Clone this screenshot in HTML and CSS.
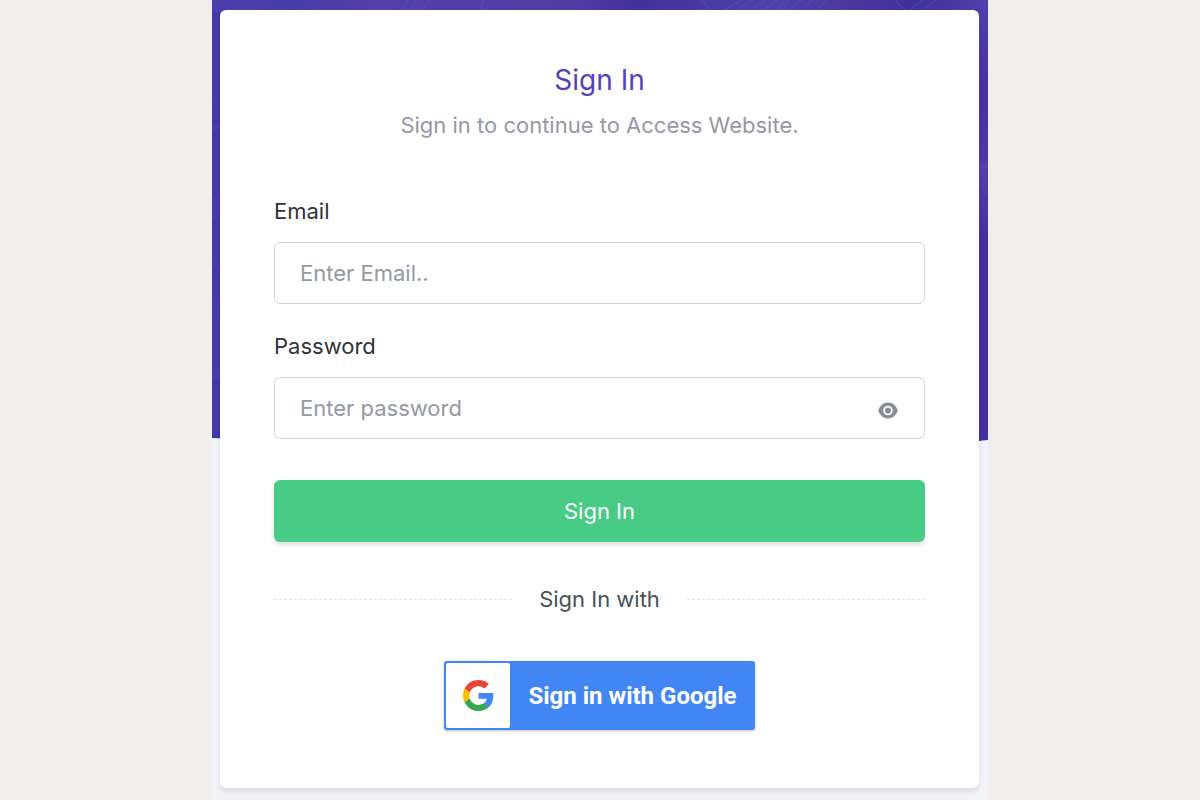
FILE: index.html
```html
<!DOCTYPE html>
<html lang="en">
<head>
<meta charset="utf-8">
<meta name="viewport" content="width=device-width, initial-scale=1">
<title>Sign In</title>
<link rel="stylesheet" href="styles.css">
</head>
<body>
<div class="page">
  <svg class="backdrop" viewBox="0 0 776 442" preserveAspectRatio="none" aria-hidden="true">
    <defs>
      <linearGradient id="top" x1="0" x2="1" y1="0" y2="0">
        <stop offset="0" stop-color="#4c40ae"/>
        <stop offset=".1" stop-color="#453dab"/>
        <stop offset=".2" stop-color="#553fa9"/>
        <stop offset=".45" stop-color="#553da6"/>
        <stop offset=".55" stop-color="#44309c"/>
        <stop offset=".72" stop-color="#4d43ad"/>
        <stop offset=".82" stop-color="#50379f"/>
        <stop offset=".9" stop-color="#40309c"/>
        <stop offset="1" stop-color="#5040ab"/>
      </linearGradient>
      <linearGradient id="right" x1="0" x2="0" y1="0" y2="1">
        <stop offset="0" stop-color="#5140ab"/>
        <stop offset=".22" stop-color="#44309e"/>
        <stop offset=".36" stop-color="#4b38a5"/>
        <stop offset=".37" stop-color="#5540aa"/>
        <stop offset=".52" stop-color="#44309f"/>
        <stop offset="1" stop-color="#44309f"/>
      </linearGradient>
    </defs>
    <path d="M0 0H776V439L766 441Q380 450 0 438Z" fill="#403aa9"/>
    <path d="M0 0H776V12H0Z" fill="url(#top)"/>
    <path d="M764 0H776V440L764 441Z" fill="url(#right)"/>
    <path d="M190 10Q194 4 196 0M198 10Q203 4 204 0M208 10Q215 5 218 0M268 10l4-10M490 0l8 10M512 10l18-10M525 10l16-10M538 10l15-10M551 10l14-10M564 10l13-10M577 10l12-10M590 10l10-10M606 10l8-10M683 0l10 10M697 10l14-10M712 10l12-10" fill="none" stroke="#5360bd" opacity=".55"/>
    <path d="M0 95q5 2 4 8l-4 2zM0 125l8-2v5l-8 5zM0 200l7-8v25l-7 4zM0 250l8 18v4l-8-8zM0 296l6 3v22l-6-3zM0 370l8-6v14l-8 2z" fill="#573eaa" opacity=".4"/>
    <path d="M769 168h1m3 0h1m-4 6h1m2 6h1m-5 4h1m3 9h1" stroke="#826bc0" fill="none" opacity=".6"/>
  </svg>
  <main class="card">
    <h1 class="title">Sign In</h1>
    <p class="subtitle">Sign in to continue to Access Website.</p>
    <form class="form">
      <div class="field">
        <label class="label" for="email">Email</label>
        <input class="input" id="email" type="email" placeholder="Enter Email..">
      </div>
      <div class="field">
        <label class="label" for="password">Password</label>
        <div class="password">
          <input class="input" id="password" type="password" placeholder="Enter password">
          <button class="reveal" type="button" aria-label="Show password">
            <svg width="20" height="17" viewBox="0 0 20 17" aria-hidden="true">
              <path d="M10 .5C5.300 .5 1.700 3.800 .3 8.500 1.700 13.200 5.300 16.500 10 16.500s8.300-3.300 9.700-8C18.300 3.800 14.700 .5 10 .5Z" fill="#898c98"/>
              <circle cx="10" cy="8.500" r="3.900" fill="#898c98" stroke="#fff" stroke-width="1.800"/>
            </svg>
          </button>
        </div>
      </div>
      <button class="submit" type="submit">Sign In</button>
    </form>
    <div class="divider"><span>Sign In with</span></div>
    <button class="google" type="button">
      <span class="google-logo">
        <svg width="31" height="31" viewBox="0 0 48 48" aria-hidden="true">
          <path fill="#ea4335" d="M24 9.500c3.540 0 6.710 1.220 9.210 3.600l6.850-6.850C35.900 2.380 30.470 0 24 0 14.620 0 6.510 5.380 2.560 13.220l7.980 6.190C12.430 13.720 17.740 9.500 24 9.500z"/>
          <path fill="#4285f4" d="M46.980 24.550c0-1.570-.15-3.090-.38-4.550H24v9.020h12.940c-.58 2.960-2.260 5.480-4.780 7.180l7.730 6c4.510-4.180 7.090-10.360 7.090-17.650z"/>
          <path fill="#fbbc05" d="M10.530 28.590c-.48-1.450-.76-2.990-.76-4.590s.27-3.140.76-4.590l-7.980-6.190C.92 16.460 0 20.120 0 24c0 3.880.92 7.540 2.560 10.780l7.970-6.190z"/>
          <path fill="#34a853" d="M24 48c6.480 0 11.930-2.130 15.890-5.810l-7.730-6c-2.150 1.450-4.920 2.300-8.160 2.300-6.260 0-11.570-4.220-13.470-9.910l-7.980 6.190C6.510 42.620 14.620 48 24 48z"/>
        </svg>
      </span>
      <span class="google-text">Sign in with Google</span>
    </button>
  </main>
</div>
</body>
</html>
```
FILE: styles.css
```css
* {
  box-sizing: border-box;
}

body {
  margin: 0;
  background: #f1eeed;
  color: #495057;
  font-family: Inter, "Liberation Sans", sans-serif;
  font-size: 22px;
  line-height: 28px;
}

.page {
  position: relative;
  max-width: 776px;
  min-height: 100vh;
  margin: 0 auto;
  padding: 10px 9px 12px 8px;
  background: #f2f2f9;
}

.backdrop {
  position: absolute;
  top: 0;
  left: 0;
  width: 100%;
  height: 442px;
}

.card {
  position: relative;
  display: flex;
  flex-direction: column;
  padding: 52px 54px 58px;
  border-radius: 6px;
  background: #fff;
  box-shadow: 0 4px 4px rgba(40, 50, 60, 0.1);
}

.title {
  margin: 0;
  color: #5543b5;
  font-size: 28px;
  font-weight: 400;
  line-height: 36px;
  text-align: center;
}

.subtitle {
  margin: 13px 0 0;
  color: #9598a5;
  text-align: center;
}

.form {
  display: flex;
  flex-direction: column;
  margin-top: 58px;
}

.field {
  display: flex;
  flex-direction: column;
  gap: 17px;
  margin-bottom: 28px;
}

.label {
  color: #30333b;
}

.input {
  width: 100%;
  height: 62px;
  padding: 0 25px;
  border: 1px solid #d0d4dc;
  border-radius: 6px;
  background: #fff;
  color: #495057;
  font: inherit;
}

.input::placeholder {
  color: #9598a5;
  opacity: 1;
}

.password {
  position: relative;
}

.password .input {
  padding-right: 64px;
}

.reveal {
  position: absolute;
  top: 0;
  right: 17px;
  bottom: 0;
  display: flex;
  align-items: center;
  justify-content: center;
  width: 40px;
  padding: 4px 0 0;
  border: 0;
  background: none;
}

.submit {
  height: 62px;
  margin-top: 13px;
  border: 0;
  border-radius: 6px;
  background: #47cb87;
  box-shadow: 0 3px 4px rgba(30, 32, 37, 0.14);
  color: #fff;
  font: inherit;
}

.divider {
  display: flex;
  align-items: center;
  gap: 27px;
  margin-top: 43px;
}

.divider::before,
.divider::after {
  content: "";
  flex: 1;
  border-top: 1px dashed #e0e3e7;
}

.google {
  display: flex;
  align-self: center;
  margin-top: 48px;
  padding: 2px;
  border: 0;
  border-radius: 3px;
  background: #4285f4;
  box-shadow: 0 1px 3px rgba(0, 0, 0, 0.25);
  color: #fff;
  font: bold 24px/28px Roboto, sans-serif;
}

.google-logo {
  display: flex;
  align-items: center;
  justify-content: center;
  width: 64px;
  height: 65px;
  border-radius: 2px;
  background: #fff;
}

.google-text {
  align-self: center;
  padding: 0 16px 0 18px;
}
```
